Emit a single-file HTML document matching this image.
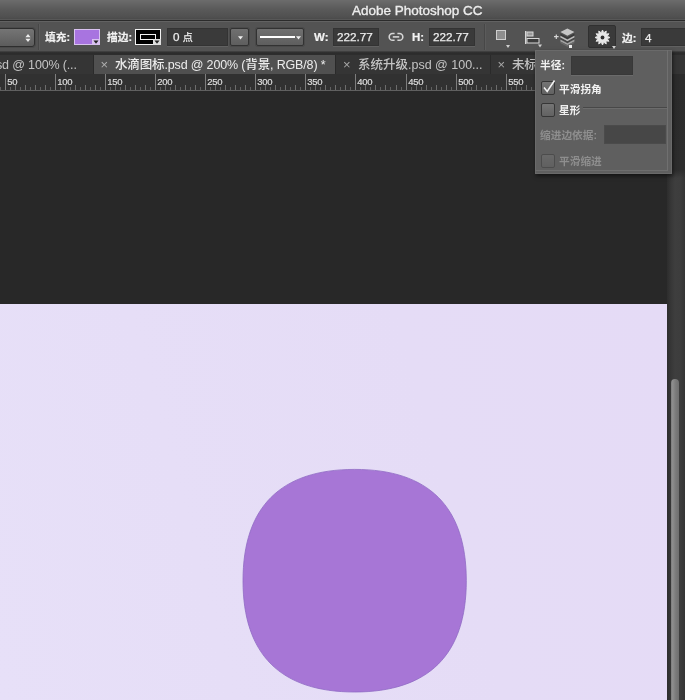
<!DOCTYPE html>
<html lang="zh">
<head>
<meta charset="utf-8">
<title>Adobe Photoshop CC</title>
<style>
html,body{margin:0;padding:0;}
body{width:685px;height:700px;overflow:hidden;background:#282828;position:relative;
  font-family:"Liberation Sans","Noto Sans CJK SC",sans-serif;color:#e4e4e4;}
.abs{position:absolute;}
#stage{position:absolute;left:0;top:0;width:685px;height:700px;overflow:hidden;will-change:transform;}
/* title bar */
#title{left:0;top:0;width:685px;height:20px;background:linear-gradient(#6c6c6c 0,#5a5a5a 45%,#505050 85%,#484848 100%);}
#title span{position:absolute;left:352px;top:3px;font-size:13.5px;line-height:16px;color:#ececec;white-space:nowrap;-webkit-text-stroke:0.35px #ececec;}
#tline{left:0;top:19px;width:685px;height:2px;background:linear-gradient(#575757 0,#575757 50%,#2b2b2b 50%,#2b2b2b 100%);}
/* options bar */
#opts{left:0;top:21px;width:685px;height:30px;background:#535353;box-shadow:inset 0 1px 0 #626262;}
#oband{left:0;top:51px;width:685px;height:4px;background:linear-gradient(#474747 0,#303030 35%,#2a2a2a 75%,#303030 100%);}
.lbl{position:absolute;font-size:10.7px;line-height:14px;font-weight:bold;color:#f2f2f2;white-space:nowrap;-webkit-text-stroke:0.2px #f2f2f2;}
.fld{position:absolute;background:#3a3a3a;border:1px solid #333;box-sizing:border-box;box-shadow:0 1px 0 #616161;}
.fld span{position:absolute;font-size:11.7px;line-height:14px;color:#ececec;white-space:nowrap;-webkit-text-stroke:0.25px #ececec;}
.btn{position:absolute;box-sizing:border-box;box-shadow:0 0 0 1px #4a4a4a;border:1px solid #323232;background:linear-gradient(#707070,#5e5e5e);border-radius:2px;}
/* tabs */
#tabs{left:0;top:55px;width:685px;height:19px;background:#353535;}
.tab{position:absolute;top:0;height:19px;box-sizing:border-box;border-right:1px solid #2a2a2a;}
.tab span{position:absolute;top:3px;font-weight:500;font-size:12.5px;line-height:15px;white-space:nowrap;color:#c4c4c4;letter-spacing:-0.15px;}
.tab.on{background:#505050;}
.tab.on span{color:#ededed;}
/* ruler */
#ruler{left:0;top:74px;width:667px;height:17px;background:#313131;border-bottom:1px solid #606060;box-sizing:border-box;}
/* canvas */
#canvas{left:0;top:304px;width:667px;height:396px;background:linear-gradient(75deg,#e7e0f8 0%,#e6def7 30%,#e5dcf6 65%,#e5dbf6 100%);}
#vscroll{left:667px;top:90px;width:18px;height:610px;background:linear-gradient(90deg,#2d2d2d 0,#373737 4px,#3e3e3e 8px,#3d3d3d 13px,#343434 18px);}
#thumb{left:670.6px;top:379px;width:8.2px;height:330px;background:linear-gradient(90deg,#7c7c7c 0,#8e8e8e 20%,#7a7a7a 60%,#6f6f6f 100%);border-radius:5px;}
/* popup */
#pop{left:535px;top:50px;width:137px;height:124px;background:#5f5f5f;box-sizing:border-box;border:1px solid #6a6a6a;box-shadow:1px 2px 4px rgba(0,0,0,.55);}
.cb{position:absolute;width:14px;height:14px;box-sizing:border-box;border:1px solid #363636;border-radius:2px;background:linear-gradient(#757575,#626262);}
.ptxt{position:absolute;font-size:10.7px;line-height:14px;font-weight:bold;color:#f0f0f0;white-space:nowrap;}
.dim{color:#8e8e8e;}
</style>
</head>
<body>
<div id="stage">

<!-- workspace / canvas -->
<div class="abs" id="canvas"></div>
<svg class="abs" style="left:0;top:304px" width="667" height="396" viewBox="0 304 667 396">
  <path id="blob" fill="#a776d6" stroke="#8f69c4" stroke-width="0.8" d="M354.7 469.4 C 428.7 469.4 466.3 506.7 466.3 580.7 C 466.3 654.7 428.7 692.0 354.7 692.0 C 280.7 692.0 243.0 654.7 243.0 580.7 C 243.0 506.7 280.7 469.4 354.7 469.4 Z"/>
</svg>
<div class="abs" id="vscroll"></div>
<div class="abs" id="thumb"></div>

<!-- title -->
<div class="abs" id="title"><span>Adobe Photoshop CC</span></div>
<div class="abs" id="tline"></div>

<!-- options bar -->
<div class="abs" id="opts">
  <!-- tool preset dropdown (cut off at left) -->
  <div class="btn" style="left:-20px;top:7px;width:55px;height:19px;background:linear-gradient(#757575,#5c5c5c);border-color:#2e2e2e;border-radius:3px"></div>
  <svg class="abs" style="left:24px;top:12px" width="8" height="10" viewBox="0 0 8 10"><path d="M4 1 L6.6 4.2 L1.4 4.2 Z M4 9 L6.6 5.8 L1.4 5.8 Z" fill="#ececec"/></svg>
  <div class="abs" style="left:38px;top:3px;width:1px;height:26px;background:#474747"></div>
  <div class="abs" style="left:39px;top:3px;width:1px;height:26px;background:#5b5b5b"></div>
  <span class="lbl" style="left:45px;top:9px">填充:</span>
  <div class="abs" style="left:74px;top:8px;width:26px;height:16px;box-sizing:border-box;border:1px solid #d9c2f0;background:#a874e0"></div>
  <svg class="abs" style="left:92px;top:18px" width="8" height="6" viewBox="0 0 8 6"><rect width="8" height="6" fill="#d9c2f0"/><path d="M1.5 1.5 L6.5 1.5 L4 4.8 Z" fill="#222"/></svg>
  <span class="lbl" style="left:107px;top:9px">描边:</span>
  <div class="abs" style="left:135px;top:8px;width:26px;height:16px;box-sizing:border-box;border:1px solid #f2f2f2;background:#000"></div>
  <div class="abs" style="left:140px;top:13px;width:16px;height:6px;box-sizing:border-box;border:1px solid #f2f2f2"></div>
  <svg class="abs" style="left:153px;top:18px" width="8" height="6" viewBox="0 0 8 6"><rect width="8" height="6" fill="#e0e0e0"/><path d="M1.5 1.5 L6.5 1.5 L4 4.8 Z" fill="#222"/></svg>
  <div class="fld" style="left:167px;top:7px;width:61px;height:18px"><span style="left:5px;top:1px">0 <span style="position:static;font-size:10px">点</span></span></div>
  <div class="btn" style="left:230px;top:7px;width:19px;height:18px"></div>
  <svg class="abs" style="left:238px;top:15px" width="5" height="4" viewBox="0 0 5 4"><path d="M0 0.3 L5 0.3 L2.5 3.6 Z" fill="#f0f0f0"/></svg>
  <div class="btn" style="left:256px;top:7px;width:48px;height:18px"></div>
  <div class="abs" style="left:260px;top:15px;width:35px;height:2px;background:#fff"></div>
  <svg class="abs" style="left:296px;top:15px" width="5" height="4" viewBox="0 0 5 4"><path d="M0 0.3 L5 0.3 L2.5 3.6 Z" fill="#f0f0f0"/></svg>
  <span class="lbl" style="left:314px;top:9px;font-size:11.5px">W:</span>
  <div class="fld" style="left:333px;top:7px;width:46px;height:18px"><span style="left:3px;top:1px">222.77</span></div>
  <!-- link icon -->
  <svg class="abs" style="left:388px;top:11px" width="16" height="10" viewBox="0 0 16 10"><g fill="none" stroke="#d6d6d6" stroke-width="1.6"><path d="M6.6 1.5 H4.6 A3.4 3.4 0 0 0 4.6 8.3 H6.6"/><path d="M9.4 1.5 H11.4 A3.4 3.4 0 0 1 11.4 8.3 H9.4"/><path d="M4.8 4.9 H11.2"/></g></svg>
  <span class="lbl" style="left:412px;top:9px;font-size:11.5px">H:</span>
  <div class="fld" style="left:429px;top:7px;width:46px;height:18px"><span style="left:3px;top:1px">222.77</span></div>
  <div class="abs" style="left:484px;top:3px;width:1px;height:26px;background:#474747"></div>
  <div class="abs" style="left:485px;top:3px;width:1px;height:26px;background:#5b5b5b"></div>
  <!-- path ops icon -->
  <div class="abs" style="left:496px;top:9px;width:10px;height:10px;box-sizing:border-box;border:1px solid #cfcfcf;background:#8e8e8e"></div>
  <svg class="abs" style="left:506px;top:24px" width="4" height="3" viewBox="0 0 4 3"><path d="M0 0 L4 0 L2 3 Z" fill="#d0d0d0"/></svg>
  <!-- align icon -->
  <svg class="abs" style="left:524px;top:9px" width="20" height="21" viewBox="0 0 20 21"><rect x="1" y="1" width="1.4" height="13" fill="#d8d8d8"/><rect x="3" y="2" width="6" height="4" fill="#9a9a9a" stroke="#d8d8d8" stroke-width="1"/><rect x="3" y="8.5" width="12" height="4.5" fill="#3c3c3c" stroke="#d8d8d8" stroke-width="1"/><path d="M14 14.5 L18 14.5 L16 17.5 Z" fill="#d0d0d0"/></svg>
  <!-- arrange icon -->
  <svg class="abs" style="left:552px;top:6px" width="25" height="22" viewBox="0 0 25 22"><path d="M4.3 7.4 v4.6 M2 9.7 h4.6" stroke="#d6d6d6" stroke-width="1.2"/><path d="M15.4 1.4 L22.4 5.1 L15.4 8.8 L8.4 5.1 Z" fill="#c6c6c6"/><path d="M8.4 6.6 L15.4 10.3 L22.4 6.6 L22.4 8.5 L15.4 12.2 L8.4 8.5 Z" fill="#3a3a3a"/><path d="M8.4 8.7 L15.4 12.399999999999999 L22.4 8.7 L22.4 10.6 L15.4 14.3 L8.4 10.6 Z" fill="#bcbcbc"/><path d="M8.4 10.8 L15.4 14.5 L22.4 10.8 L22.4 12.4 L15.4 16.1 L8.4 12.4 Z" fill="#484848"/><path d="M8.4 12.6 L15.4 16.3 L22.4 12.6 L22.4 14.4 L15.4 18.1 L8.4 14.4 Z" fill="#a2a2a2"/><path d="M8.4 14.6 L15.4 18.3 L22.4 14.6 L22.4 16.0 L15.4 19.7 L8.4 16.0 Z" fill="#6a6a6a"/><rect x="17" y="18" width="3" height="3" fill="#ececec"/></svg>
  <!-- gear button -->
  <div class="abs" style="left:588px;top:4px;width:28px;height:23px;box-sizing:border-box;border:1px solid #303030;background:#3a3a3a;border-radius:2px"></div>
  <svg class="abs" style="left:594px;top:8px" width="17" height="17" viewBox="-8.5 -8.5 17 17"><polygon points="0.00,-7.50 1.27,-4.73 3.75,-6.50 3.46,-3.46 6.50,-3.75 4.73,-1.27 7.50,0.00 4.73,1.27 6.50,3.75 3.46,3.46 3.75,6.50 1.27,4.73 0.00,7.50 -1.27,4.73 -3.75,6.50 -3.46,3.46 -6.50,3.75 -4.73,1.27 -7.50,0.00 -4.73,-1.27 -6.50,-3.75 -3.46,-3.46 -3.75,-6.50 -1.27,-4.73" fill="#e6e6e6" stroke="#e6e6e6" stroke-width="0.9" stroke-linejoin="round"/><circle r="1.9" fill="#2e2e2e"/></svg>
  <svg class="abs" style="left:612px;top:25px" width="4" height="3" viewBox="0 0 4 3"><path d="M0 0 L4 0 L2 3 Z" fill="#d0d0d0"/></svg>
  <span class="lbl" style="left:622px;top:10px">边:</span>
  <div class="fld" style="left:641px;top:7px;width:50px;height:18px"><span style="left:3px;top:2px">4</span></div>
</div>

<div class="abs" id="oband"></div>
<!-- tabs -->
<div class="abs" id="tabs">
  <div class="tab" style="left:0;width:94px"><span style="left:-4px">sd @ 100% (...</span></div>
  <div class="tab on" style="left:94px;width:242px"><span style="left:6.5px;top:2px;font-size:13px;font-weight:400;color:#b0b0b0">×</span><span style="left:21px">水滴图标.psd @ 200% (背景, RGB/8) *</span></div>
  <div class="tab" style="left:336px;width:155px"><span style="left:7px;top:2px;font-size:13px;font-weight:400;color:#a8a8a8">×</span><span style="left:22px;letter-spacing:0">系统升级.psd @ 100...</span></div>
  <div class="tab" style="left:491px;width:194px;border-right:0"><span style="left:6.5px;top:2px;font-size:13px;font-weight:400;color:#a8a8a8">×</span><span style="left:21px">未标</span></div>
</div>

<!-- ruler -->
<div class="abs" id="ruler"></div>
<svg class="abs" style="left:0;top:74px" width="667" height="17" viewBox="0 0 667 17" shape-rendering="crispEdges">
<rect x="0" y="13" width="1" height="3" fill="#606060"/>
<rect x="5" y="0" width="1" height="16" fill="#7e7e7e"/>
<rect x="10" y="13" width="1" height="3" fill="#606060"/>
<rect x="15" y="11" width="1" height="5" fill="#6c6c6c"/>
<rect x="20" y="13" width="1" height="3" fill="#606060"/>
<rect x="25" y="11" width="1" height="5" fill="#6c6c6c"/>
<rect x="30" y="13" width="1" height="3" fill="#606060"/>
<rect x="35" y="11" width="1" height="5" fill="#6c6c6c"/>
<rect x="40" y="13" width="1" height="3" fill="#606060"/>
<rect x="45" y="11" width="1" height="5" fill="#6c6c6c"/>
<rect x="50" y="13" width="1" height="3" fill="#606060"/>
<rect x="55" y="0" width="1" height="16" fill="#7e7e7e"/>
<rect x="60" y="13" width="1" height="3" fill="#606060"/>
<rect x="65" y="11" width="1" height="5" fill="#6c6c6c"/>
<rect x="70" y="13" width="1" height="3" fill="#606060"/>
<rect x="75" y="11" width="1" height="5" fill="#6c6c6c"/>
<rect x="80" y="13" width="1" height="3" fill="#606060"/>
<rect x="85" y="11" width="1" height="5" fill="#6c6c6c"/>
<rect x="90" y="13" width="1" height="3" fill="#606060"/>
<rect x="95" y="11" width="1" height="5" fill="#6c6c6c"/>
<rect x="100" y="13" width="1" height="3" fill="#606060"/>
<rect x="105" y="0" width="1" height="16" fill="#7e7e7e"/>
<rect x="110" y="13" width="1" height="3" fill="#606060"/>
<rect x="115" y="11" width="1" height="5" fill="#6c6c6c"/>
<rect x="120" y="13" width="1" height="3" fill="#606060"/>
<rect x="125" y="11" width="1" height="5" fill="#6c6c6c"/>
<rect x="130" y="13" width="1" height="3" fill="#606060"/>
<rect x="135" y="11" width="1" height="5" fill="#6c6c6c"/>
<rect x="140" y="13" width="1" height="3" fill="#606060"/>
<rect x="145" y="11" width="1" height="5" fill="#6c6c6c"/>
<rect x="150" y="13" width="1" height="3" fill="#606060"/>
<rect x="155" y="0" width="1" height="16" fill="#7e7e7e"/>
<rect x="160" y="13" width="1" height="3" fill="#606060"/>
<rect x="165" y="11" width="1" height="5" fill="#6c6c6c"/>
<rect x="170" y="13" width="1" height="3" fill="#606060"/>
<rect x="175" y="11" width="1" height="5" fill="#6c6c6c"/>
<rect x="180" y="13" width="1" height="3" fill="#606060"/>
<rect x="185" y="11" width="1" height="5" fill="#6c6c6c"/>
<rect x="190" y="13" width="1" height="3" fill="#606060"/>
<rect x="195" y="11" width="1" height="5" fill="#6c6c6c"/>
<rect x="200" y="13" width="1" height="3" fill="#606060"/>
<rect x="205" y="0" width="1" height="16" fill="#7e7e7e"/>
<rect x="210" y="13" width="1" height="3" fill="#606060"/>
<rect x="215" y="11" width="1" height="5" fill="#6c6c6c"/>
<rect x="220" y="13" width="1" height="3" fill="#606060"/>
<rect x="225" y="11" width="1" height="5" fill="#6c6c6c"/>
<rect x="230" y="13" width="1" height="3" fill="#606060"/>
<rect x="235" y="11" width="1" height="5" fill="#6c6c6c"/>
<rect x="240" y="13" width="1" height="3" fill="#606060"/>
<rect x="245" y="11" width="1" height="5" fill="#6c6c6c"/>
<rect x="250" y="13" width="1" height="3" fill="#606060"/>
<rect x="255" y="0" width="1" height="16" fill="#7e7e7e"/>
<rect x="260" y="13" width="1" height="3" fill="#606060"/>
<rect x="265" y="11" width="1" height="5" fill="#6c6c6c"/>
<rect x="270" y="13" width="1" height="3" fill="#606060"/>
<rect x="275" y="11" width="1" height="5" fill="#6c6c6c"/>
<rect x="280" y="13" width="1" height="3" fill="#606060"/>
<rect x="285" y="11" width="1" height="5" fill="#6c6c6c"/>
<rect x="290" y="13" width="1" height="3" fill="#606060"/>
<rect x="295" y="11" width="1" height="5" fill="#6c6c6c"/>
<rect x="300" y="13" width="1" height="3" fill="#606060"/>
<rect x="305" y="0" width="1" height="16" fill="#7e7e7e"/>
<rect x="310" y="13" width="1" height="3" fill="#606060"/>
<rect x="315" y="11" width="1" height="5" fill="#6c6c6c"/>
<rect x="320" y="13" width="1" height="3" fill="#606060"/>
<rect x="325" y="11" width="1" height="5" fill="#6c6c6c"/>
<rect x="330" y="13" width="1" height="3" fill="#606060"/>
<rect x="335" y="11" width="1" height="5" fill="#6c6c6c"/>
<rect x="340" y="13" width="1" height="3" fill="#606060"/>
<rect x="345" y="11" width="1" height="5" fill="#6c6c6c"/>
<rect x="350" y="13" width="1" height="3" fill="#606060"/>
<rect x="355" y="0" width="1" height="16" fill="#7e7e7e"/>
<rect x="360" y="13" width="1" height="3" fill="#606060"/>
<rect x="365" y="11" width="1" height="5" fill="#6c6c6c"/>
<rect x="370" y="13" width="1" height="3" fill="#606060"/>
<rect x="375" y="11" width="1" height="5" fill="#6c6c6c"/>
<rect x="380" y="13" width="1" height="3" fill="#606060"/>
<rect x="385" y="11" width="1" height="5" fill="#6c6c6c"/>
<rect x="390" y="13" width="1" height="3" fill="#606060"/>
<rect x="396" y="11" width="1" height="5" fill="#6c6c6c"/>
<rect x="401" y="13" width="1" height="3" fill="#606060"/>
<rect x="406" y="0" width="1" height="16" fill="#7e7e7e"/>
<rect x="411" y="13" width="1" height="3" fill="#606060"/>
<rect x="416" y="11" width="1" height="5" fill="#6c6c6c"/>
<rect x="421" y="13" width="1" height="3" fill="#606060"/>
<rect x="426" y="11" width="1" height="5" fill="#6c6c6c"/>
<rect x="431" y="13" width="1" height="3" fill="#606060"/>
<rect x="436" y="11" width="1" height="5" fill="#6c6c6c"/>
<rect x="441" y="13" width="1" height="3" fill="#606060"/>
<rect x="446" y="11" width="1" height="5" fill="#6c6c6c"/>
<rect x="451" y="13" width="1" height="3" fill="#606060"/>
<rect x="456" y="0" width="1" height="16" fill="#7e7e7e"/>
<rect x="461" y="13" width="1" height="3" fill="#606060"/>
<rect x="466" y="11" width="1" height="5" fill="#6c6c6c"/>
<rect x="471" y="13" width="1" height="3" fill="#606060"/>
<rect x="476" y="11" width="1" height="5" fill="#6c6c6c"/>
<rect x="481" y="13" width="1" height="3" fill="#606060"/>
<rect x="486" y="11" width="1" height="5" fill="#6c6c6c"/>
<rect x="491" y="13" width="1" height="3" fill="#606060"/>
<rect x="496" y="11" width="1" height="5" fill="#6c6c6c"/>
<rect x="501" y="13" width="1" height="3" fill="#606060"/>
<rect x="506" y="0" width="1" height="16" fill="#7e7e7e"/>
<rect x="511" y="13" width="1" height="3" fill="#606060"/>
<rect x="516" y="11" width="1" height="5" fill="#6c6c6c"/>
<rect x="521" y="13" width="1" height="3" fill="#606060"/>
<rect x="526" y="11" width="1" height="5" fill="#6c6c6c"/>
<rect x="531" y="13" width="1" height="3" fill="#606060"/>
<rect x="536" y="11" width="1" height="5" fill="#6c6c6c"/>
<rect x="541" y="13" width="1" height="3" fill="#606060"/>
<rect x="546" y="11" width="1" height="5" fill="#6c6c6c"/>
<rect x="551" y="13" width="1" height="3" fill="#606060"/>
<rect x="556" y="0" width="1" height="16" fill="#7e7e7e"/>
<rect x="561" y="13" width="1" height="3" fill="#606060"/>
<rect x="566" y="11" width="1" height="5" fill="#6c6c6c"/>
<rect x="571" y="13" width="1" height="3" fill="#606060"/>
<rect x="576" y="11" width="1" height="5" fill="#6c6c6c"/>
<rect x="581" y="13" width="1" height="3" fill="#606060"/>
<rect x="586" y="11" width="1" height="5" fill="#6c6c6c"/>
<rect x="591" y="13" width="1" height="3" fill="#606060"/>
<rect x="596" y="11" width="1" height="5" fill="#6c6c6c"/>
<rect x="601" y="13" width="1" height="3" fill="#606060"/>
<rect x="606" y="0" width="1" height="16" fill="#7e7e7e"/>
<rect x="611" y="13" width="1" height="3" fill="#606060"/>
<rect x="616" y="11" width="1" height="5" fill="#6c6c6c"/>
<rect x="621" y="13" width="1" height="3" fill="#606060"/>
<rect x="626" y="11" width="1" height="5" fill="#6c6c6c"/>
<rect x="631" y="13" width="1" height="3" fill="#606060"/>
<rect x="636" y="11" width="1" height="5" fill="#6c6c6c"/>
<rect x="641" y="13" width="1" height="3" fill="#606060"/>
<rect x="646" y="11" width="1" height="5" fill="#6c6c6c"/>
<rect x="651" y="13" width="1" height="3" fill="#606060"/>
<rect x="656" y="0" width="1" height="16" fill="#7e7e7e"/>
<rect x="661" y="13" width="1" height="3" fill="#606060"/>
<rect x="666" y="11" width="1" height="5" fill="#6c6c6c"/>
<g font-family="Liberation Sans, sans-serif" font-size="9.5" letter-spacing="-0.3" fill="#dedede" stroke="#dedede" stroke-width="0.2" shape-rendering="auto"><text x="7.3" y="11">50</text><text x="57.3" y="11">100</text><text x="107.3" y="11">150</text><text x="157.3" y="11">200</text><text x="207.3" y="11">250</text><text x="257.3" y="11">300</text><text x="307.3" y="11">350</text><text x="357.3" y="11">400</text><text x="408.3" y="11">450</text><text x="458.3" y="11">500</text><text x="508.3" y="11">550</text><text x="558.3" y="11">600</text><text x="608.3" y="11">650</text><text x="658.3" y="11">700</text></g>
</svg>

<div class="abs" style="left:667px;top:74px;width:18px;height:104px;background:linear-gradient(#2c2c2c 0,#2d2d2d 92%,rgba(45,45,45,0) 100%)"></div>
<!-- popup -->
<div class="abs" id="pop">
  <div class="abs" style="left:-1px;top:-1px;width:133px;height:121px;box-sizing:border-box;border-right:1px solid #707070;border-bottom:1px solid #6e6e6e"></div>
  <span class="ptxt" style="left:4px;top:7px">半径:</span>
  <div class="fld" style="left:35px;top:5px;width:62px;height:19px;background:#3c3c3c;border-color:#383838;box-shadow:0 1px 0 #6b6b6b"></div>
  <div class="cb" style="left:5px;top:30px"></div>
  <svg class="abs" style="left:5px;top:28px" width="16" height="16" viewBox="0 0 16 16"><path d="M3 8.5 L6.2 12.5 L13.5 1.5" fill="none" stroke="#f4f4f4" stroke-width="1.5"/></svg>
  <span class="ptxt" style="left:23px;top:31px">平滑拐角</span>
  <div class="cb" style="left:5px;top:52px"></div>
  <span class="ptxt" style="left:23px;top:52px">星形</span>
  <div class="abs" style="left:47px;top:56px;width:84px;height:1px;background:#484848"></div>
  <div class="abs" style="left:47px;top:57px;width:84px;height:1px;background:#6c6c6c"></div>
  <span class="ptxt dim" style="left:4px;top:77px">缩进边依据:</span>
  <div class="fld" style="left:68px;top:74px;width:62px;height:19px;background:#474747;border-color:#4b4b4b;box-shadow:none"></div>
  <div class="cb" style="left:5px;top:103px;opacity:.45"></div>
  <span class="ptxt dim" style="left:23px;top:103px">平滑缩进</span>
</div>

</div>
</body>
</html>
